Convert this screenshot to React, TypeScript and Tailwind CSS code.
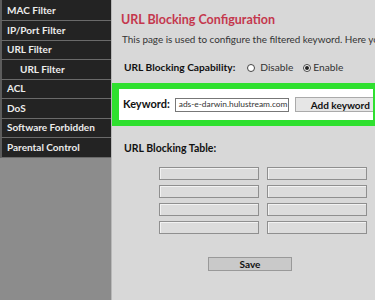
export default function App() {
  const items = [
    { label: 'MAC Filter', sub: false },
    { label: 'IP/Port Filter', sub: false },
    { label: 'URL Filter', sub: false },
    { label: 'URL Filter', sub: true },
    { label: 'ACL', sub: false },
    { label: 'DoS', sub: false },
    { label: 'Software Forbidden', sub: false },
    { label: 'Parental Control', sub: false },
  ]

  return (
    <div
      className="flex w-[375px] h-[300px] overflow-hidden"
      style={{ fontFamily: 'Lato, "Open Sans", sans-serif' }}
    >
      {/* Sidebar */}
      <aside className="w-[112px] shrink-0 flex flex-col bg-[#8c8c8c] border-r border-[#b8b8b8]">
        {items.map((item, i) => (
          <div
            key={i}
            className={`${i === 0 ? 'h-[21px]' : 'h-[19.5px]'} flex items-center bg-[#232323] border-l-2 border-l-[#5c5c5c] border-b border-b-[#6a6a6a] text-[10px] font-bold text-[#ececec] whitespace-nowrap ${item.sub ? 'pl-[18px]' : 'pl-[5px]'}`}
          >
            {item.label}
          </div>
        ))}
        <div className="flex-1" />
      </aside>

      {/* Main */}
      <main className="flex-1 min-w-0 bg-[#d8d8d8] flex flex-col">
        <h1 className="pl-[9px] pt-[11px] text-[12.5px] leading-[18px] font-bold text-[#c4374d] whitespace-nowrap">
          URL Blocking Configuration
        </h1>
        <p className="pl-[10px] mt-[3px] text-[9.9px] leading-[14px] text-[#333] whitespace-nowrap overflow-hidden">
          This page is used to configure the filtered keyword. Here you can add or delete filtered keywords.
        </p>

        <div className="pl-[12px] mt-[14px] h-[16px] flex items-center text-[10.2px] whitespace-nowrap">
          <span className="font-bold text-[#111]">URL Blocking Capability:</span>
          <label className="ml-[12px] flex items-center gap-[5px] text-[#333]">
            <span className="w-[8px] h-[8px] rounded-full border border-[#444] bg-white" />
            Disable
          </label>
          <label className="ml-[10px] flex items-center gap-[2px] text-[#333]">
            <span className="w-[8px] h-[8px] rounded-full border border-[#444] bg-white flex items-center justify-center">
              <span className="w-[4px] h-[4px] rounded-full bg-[#222]" />
            </span>
            Enable
          </label>
        </div>

        {/* Highlighted keyword box */}
        <div className="mt-[7px] border-[6px] border-l-[7px] border-r-[2px] border-[#2fe02f] bg-white h-[43px] flex items-center whitespace-nowrap overflow-hidden">
          <span className="pl-[4px] text-[11px] font-bold text-[#111]">Keyword:</span>
          <div className="ml-[5px] w-[114px] h-[14px] shrink-0 border border-[#777] bg-white flex items-center pl-[3px] text-[8.4px] text-[#333] overflow-hidden">
            ads-e-darwin.hulustream.com
          </div>
          <button className="ml-[6px] w-[84px] h-[15px] shrink-0 border border-[#aaa] bg-[#e6e6e6] text-[10px] font-bold text-[#111] leading-none flex items-center pl-[15px]">
            Add keyword
          </button>
        </div>

        <div className="pl-[12px] mt-[15px] h-[16px] flex items-center text-[10.5px] font-bold text-[#111]">
          URL Blocking Table:
        </div>

        <div className="ml-[47px] mt-[10px] grid grid-cols-[100px_100px] gap-x-[8px] gap-y-[5px]">
          {Array.from({ length: 8 }).map((_, i) => (
            <div
              key={i}
              className="h-[13px] border border-[#8f8f8f] bg-[#dcdcdc] shadow-[inset_1px_1px_0_#f2f2f2]"
            />
          ))}
        </div>

        <button className="ml-[96px] mt-[23px] w-[84px] h-[14px] border border-[#999] bg-[#c9c9c9] text-[10px] font-bold text-[#111] leading-none flex items-center justify-center">
          Save
        </button>
      </main>
    </div>
  )
}
